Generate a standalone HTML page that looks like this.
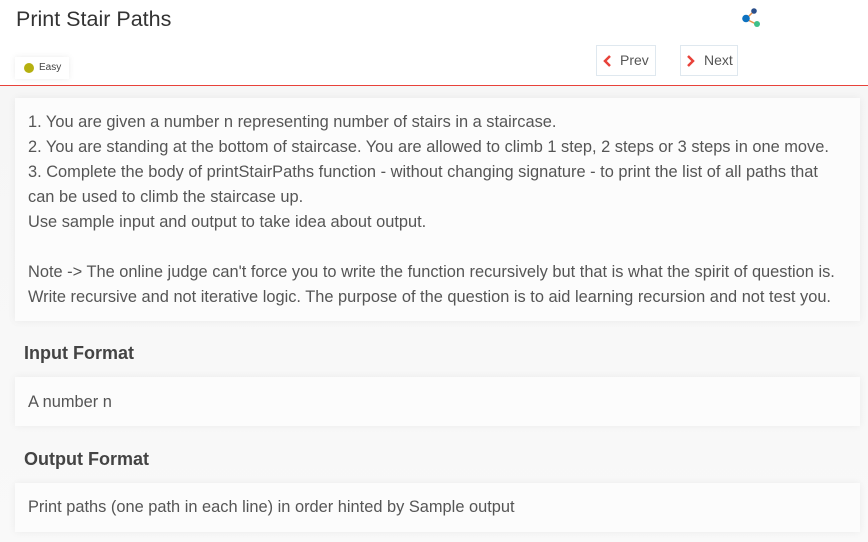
<!DOCTYPE html>
<html><head><meta charset="utf-8"><style>
*{margin:0;padding:0;box-sizing:border-box}
body{width:868px;height:542px;overflow:hidden;background:#fff;font-family:"Liberation Sans",sans-serif;color:#444;position:relative}
.title{position:absolute;left:16px;top:7px;font-size:21.5px;color:#333}
.easy{position:absolute;left:15px;top:57px;width:54px;height:22px;background:#fff;box-shadow:0 0 6px rgba(0,0,0,.08);font-size:10px;color:#444;line-height:22px;padding-left:24px}
.easy:before{content:"";position:absolute;left:9px;top:6px;width:10px;height:10px;border-radius:50%;background:#b5b010}
.btn{position:absolute;top:45px;height:31px;border:1px solid #dfe8ef;background:#fff;font-size:14px;color:#555;line-height:29px}
.btn svg{position:absolute;top:9px}
.line{position:absolute;left:0;top:85px;width:868px;height:1px;background:#e8423a}
.bg{position:absolute;left:0;top:86px;width:868px;height:456px;background:linear-gradient(#f6f6f6,#f9f9f9)}
.card{position:absolute;left:15px;width:845px;background:#fcfcfc;box-shadow:0 0 8px rgba(0,0,0,.06);font-size:16.4px;line-height:25px;padding-left:13px;padding-right:10px;color:#555}
h3{position:absolute;left:24px;font-size:18px;font-weight:bold;color:#444}
</style></head><body>
<div class="title">Print Stair Paths</div>
<svg style="position:absolute;left:740px;top:7px" width="24" height="22"><line x1="6" y1="12" x2="14" y2="4" stroke="#e8914a" stroke-width="1.5"/><line x1="6" y1="12" x2="16" y2="17" stroke="#e8914a" stroke-width="1.5"/><circle cx="6" cy="11.5" r="3.8" fill="#0e72c0"/><circle cx="14" cy="4" r="2.8" fill="#2b4f8a"/><circle cx="17" cy="17" r="3" fill="#3fc08a"/></svg>
<div class="easy">Easy</div>
<div class="btn" style="left:596px;width:60px;padding-left:23px"><svg style="left:6px" width="10" height="12"><path d="M7 1L2 6L7 11" stroke="#e8423a" stroke-width="2.5" fill="none"/></svg>Prev</div>
<div class="btn" style="left:680px;width:58px;padding-left:23px"><svg style="left:5px" width="10" height="12"><path d="M2 1L7 6L2 11" stroke="#e8423a" stroke-width="2.5" fill="none"/></svg>Next</div>
<div class="line"></div>
<div class="bg"></div>
<div class="card" style="top:98px;height:223px;padding-top:12px">1. You are given a number n representing number of stairs in a staircase.<br>2. You are standing at the bottom of staircase. You are allowed to climb 1 step, 2 steps or 3 steps in one move.<br>3. Complete the body of printStairPaths function - without changing signature - to print the list of all paths that<br>can be used to climb the staircase up.<br>Use sample input and output to take idea about output.<br><br><span style="white-space:nowrap">Note -&gt; The online judge can't force you to write the function recursively but that is what the spirit of question is.</span><br><span style="white-space:nowrap">Write recursive and not iterative logic. The purpose of the question is to aid learning recursion and not test you.</span></div>
<h3 style="top:343px">Input Format</h3>
<div class="card" style="top:377px;height:49px;padding-top:13px">A number n</div>
<h3 style="top:449px">Output Format</h3>
<div class="card" style="top:483px;height:49px;padding-top:12px">Print paths (one path in each line) in order hinted by Sample output</div>
</body></html>
